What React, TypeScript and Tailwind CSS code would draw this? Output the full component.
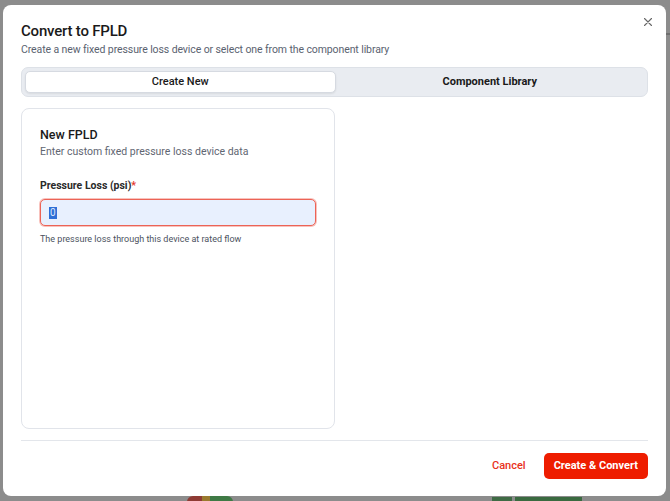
import React from "react";

export default function App() {
  return (
    <div
      className="relative w-[670px] h-[501px] overflow-hidden bg-[#8c8c8c]"
      style={{ fontFamily: "Roboto, 'Noto Sans', sans-serif" }}
    >
      {/* faint background hints */}
      <div className="absolute left-0 top-0 w-[670px] h-[501px]">
        <div className="absolute right-0 top-[33px] w-[4px] h-[2px] bg-[#6f6f6f]" />
        <div className="absolute left-[187px] top-[496px] w-[46px] h-[12px] rounded-full overflow-hidden flex">
          <div className="w-[15px] h-full bg-[#8f3b34]" />
          <div className="w-[8px] h-full bg-[#9a7a2e]" />
          <div className="flex-1 h-full bg-[#3f7a45]" />
        </div>
        <div className="absolute left-[492px] top-[497px] w-[20px] h-[4px] bg-[#3f6b45]" />
        <div className="absolute left-[515px] top-[497px] w-[67px] h-[4px] bg-[#3a6a40]" />
      </div>

      <div className="absolute left-[3px] top-[5px] w-[663px] h-[491px] rounded-[8px] bg-white flex flex-col px-[18px] pt-[16px] pb-[17px]">
        <button className="absolute right-[14px] top-[13px] w-[8px] h-[8px] flex items-center justify-center text-[#666]">
          <svg width="8" height="8" viewBox="0 0 8 8" fill="none" stroke="currentColor" strokeWidth="1.1" strokeLinecap="round">
            <path d="M0.5 0.5L7.5 7.5M7.5 0.5L0.5 7.5" />
          </svg>
        </button>

        <h2 className="text-[15px] leading-[20px] font-medium text-[#1a1a1a] tracking-[-0.2px]">Convert to FPLD</h2>
        <p className="mt-[2px] text-[10.5px] leading-[14px] text-[#5a6270] tracking-[-0.1px]">
          Create a new fixed pressure loss device or select one from the component library
        </p>

        <div className="mt-[10px] h-[30px] rounded-[7px] bg-[#e9ecf1] border border-[#dde1e7] p-[3px] flex">
          <div className="flex-1 rounded-[5px] bg-white border border-[#d6dae1] shadow-[0_1px_2px_rgba(0,0,0,0.08)] flex items-center justify-center text-[11px] font-medium text-[#1a1a1a]">
            Create New
          </div>
          <div className="flex-1 flex items-center justify-center text-[11px] font-bold text-[#1a1a1a]">
            Component Library
          </div>
        </div>

        <div className="mt-[11px] flex gap-[14px]">
          <div className="w-[314px] h-[321px] rounded-[8px] border border-[#e1e4ea] px-[18px] pt-[18px]">
            <div className="text-[12.5px] leading-[16px] font-medium text-[#1a1a1a]">New FPLD</div>
            <div className="mt-[2px] text-[10.5px] leading-[14px] text-[#5f6672]">Enter custom fixed pressure loss device data</div>
            <div className="mt-[20px] text-[10.5px] leading-[14px] font-bold text-[#2a2a2a]">
              Pressure Loss (psi)<span className="text-[#e5362b]">*</span>
            </div>
            <div className="mt-[6px] h-[27px] rounded-[5px] border border-[#ec6356] shadow-[0_0_0_1px_rgba(239,120,108,0.45)] bg-[#e8f0fe] flex items-center px-[8px]">
              <span className="bg-[#2f6fd6] text-[#dfe8fb] text-[10px] leading-[12px] px-[1px]">0</span>
            </div>
            <div className="mt-[7px] text-[9px] leading-[12px] text-[#4b5260]">The pressure loss through this device at rated flow</div>
          </div>
        </div>

        <div className="mt-auto h-px bg-[#e3e6eb]" />
        <div className="mt-[12px] flex justify-end items-center gap-[18px]">
          <button className="text-[11px] font-medium text-[#e8321b]">Cancel</button>
          <button className="h-[26px] px-[10px] rounded-[5px] bg-[#ee1d00] text-white text-[11px] font-bold">Create &amp; Convert</button>
        </div>
      </div>
    </div>
  );
}
